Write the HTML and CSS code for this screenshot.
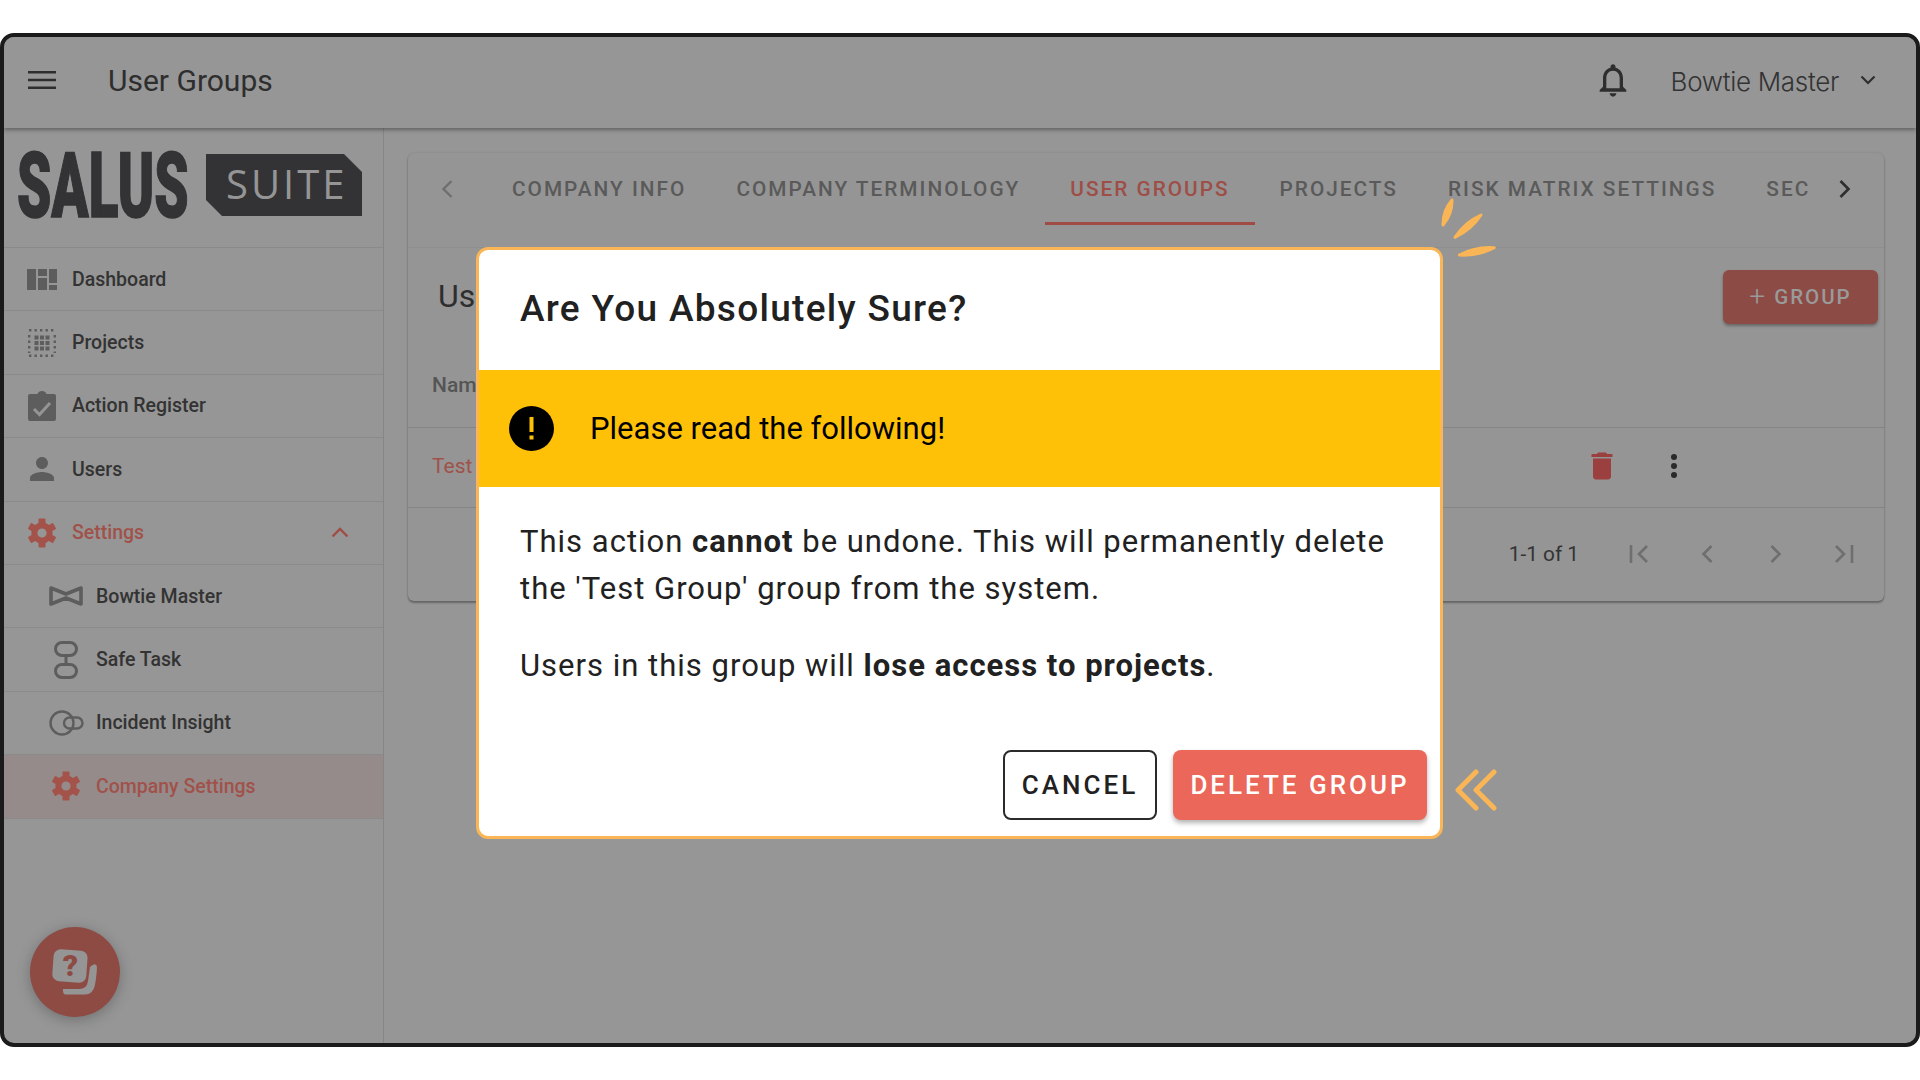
FILE: index.html
```html
<!DOCTYPE html>
<html lang="en">
<head>
    <meta charset="UTF-8">
    <title>User Groups</title>
    <link rel="stylesheet" href="styles.css">
</head>
<body>
    <svg class="defs" width="0" height="0">
        <symbol id="gear" viewBox="0 0 30 30">
            <circle cx="15" cy="15" r="7.6" fill="none" stroke="currentColor" stroke-width="6"/>
            <rect x="11.5" y="0.5" width="7" height="6" rx="1"/>
            <rect x="11.5" y="0.5" width="7" height="6" rx="1" transform="rotate(60 15 15)"/>
            <rect x="11.5" y="0.5" width="7" height="6" rx="1" transform="rotate(120 15 15)"/>
            <rect x="11.5" y="0.5" width="7" height="6" rx="1" transform="rotate(180 15 15)"/>
            <rect x="11.5" y="0.5" width="7" height="6" rx="1" transform="rotate(240 15 15)"/>
            <rect x="11.5" y="0.5" width="7" height="6" rx="1" transform="rotate(300 15 15)"/>
        </symbol>
    </svg>

    <div class="frame">
        <header class="topbar">
            <svg class="menu-icon" width="28" height="18" viewBox="0 0 28 18"><path d="M0 1.2h28M0 9h28M0 16.8h28" stroke="currentColor" stroke-width="2.4"/></svg>
            <h1 class="page-title">User Groups</h1>
            <svg class="bell" width="40" height="40" viewBox="0 0 24 24"><path d="M12 22c1.1 0 2-.9 2-2h-4c0 1.1.9 2 2 2zm6-6v-5c0-3.07-1.63-5.64-4.5-6.32V4c0-.83-.67-1.5-1.5-1.5s-1.5.67-1.5 1.5v.68C7.64 5.36 6 7.92 6 11v5l-2 2v1h16v-1l-2-2zm-2 1H8v-6c0-2.48 1.51-4.5 4-4.5s4 2.02 4 4.5v6z"/></svg>
            <span class="user-name">Bowtie Master</span>
            <svg class="user-caret" width="16" height="10" viewBox="0 0 16 10"><path d="M1.5 1.5 8 8l6.5-6.5" fill="none" stroke="currentColor" stroke-width="2.2"/></svg>
        </header>

        <div class="layout">
            <aside class="sidebar">
                <div class="logo">
                    <svg width="350" height="110" viewBox="0 -20 350 110">
                        <text class="logo-salus" transform="translate(-1 64) scale(.61 1)">SALUS</text>
                        <path class="logo-tag" d="M188 1h138l18 18v44H204L188 47z"/>
                        <text x="208" y="46" class="logo-suite">SUITE</text>
                    </svg>
                </div>
                <nav>
                    <a class="nav-item">
                        <span class="nav-icon"><svg width="30" height="21" viewBox="0 0 30 21"><path d="M0 0h9v21H0zM11 0h9v7h-9zM11 9h9v12h-9zM22 0h8v14h-8zM22 16h8v5h-8z"/></svg></span>
                        Dashboard
                    </a>
                    <a class="nav-item">
                        <span class="nav-icon"><svg width="28" height="28" viewBox="0 0 28 28"><path d="M6.5 6.5h4v4h-4zM12 6.5h4v4h-4zM17.5 6.5h4v4h-4zM6.5 12h4v4h-4zM12 12h4v4h-4zM17.5 12h4v4h-4zM6.5 17.5h4v4h-4zM12 17.5h4v4h-4zM17.5 17.5h4v4h-4z"/><path d="M1 1.2h27M1 26.8h27M1.2 6v18M26.8 6v18" fill="none" stroke="currentColor" stroke-width="2.4" stroke-dasharray="2.4 3.1"/></svg></span>
                        Projects
                    </a>
                    <a class="nav-item">
                        <span class="nav-icon"><svg width="28" height="30" viewBox="0 0 28 30"><path d="M2 3h7.5C10 1 12 0 14 0s4 1 4.5 3H26a2 2 0 0 1 2 2v23a2 2 0 0 1-2 2H2a2 2 0 0 1-2-2V5a2 2 0 0 1 2-2z"/><path d="m6 18 5.5 5.5L22 12" fill="none" stroke="#959595" stroke-width="3"/></svg></span>
                        Action Register
                    </a>
                    <a class="nav-item">
                        <span class="nav-icon"><svg width="36" height="36" viewBox="0 0 24 24"><path d="M12 12c2.21 0 4-1.79 4-4s-1.79-4-4-4-4 1.79-4 4 1.79 4 4 4zm0 2c-2.67 0-8 1.34-8 4v2h16v-2c0-2.66-5.33-4-8-4z"/></svg></span>
                        Users
                    </a>
                    <a class="nav-item is-open">
                        <span class="nav-icon"><svg width="30" height="30"><use href="#gear"/></svg></span>
                        Settings
                        <svg class="nav-caret" width="18" height="11" viewBox="0 0 18 11"><path d="M1.5 9.5 9 2l7.5 7.5" fill="none" stroke="currentColor" stroke-width="2.4"/></svg>
                    </a>
                    <a class="nav-item sub">
                        <span class="nav-icon"><svg width="34" height="20" viewBox="0 0 34 20"><path d="M2 2 17 8 32 2v16L17 12 2 18z" fill="none" stroke="currentColor" stroke-width="3.6" stroke-linejoin="round"/></svg></span>
                        Bowtie Master
                    </a>
                    <a class="nav-item sub">
                        <span class="nav-icon"><svg width="24" height="38" viewBox="0 0 24 38"><rect x="1.5" y="1.5" width="21" height="13" rx="6.5" fill="none" stroke="currentColor" stroke-width="3"/><rect x="1.5" y="23.5" width="21" height="13" rx="6.5" fill="none" stroke="currentColor" stroke-width="3"/><path d="M12 14v10" stroke="currentColor" stroke-width="3"/></svg></span>
                        Safe Task
                    </a>
                    <a class="nav-item sub">
                        <span class="nav-icon"><svg width="35" height="26" viewBox="0 0 35 26"><circle cx="13" cy="13" r="11.5" fill="none" stroke="currentColor" stroke-width="2.4"/><rect x="15" y="7.5" width="18.5" height="11" rx="5.5" fill="none" stroke="currentColor" stroke-width="2.4"/></svg></span>
                        Incident Insight
                    </a>
                    <a class="nav-item sub is-active">
                        <span class="nav-icon"><svg width="30" height="30"><use href="#gear"/></svg></span>
                        Company Settings
                    </a>
                </nav>
                <button class="help-fab">
                    <svg width="46" height="46" viewBox="0 0 46 46">
                        <path class="fab-back" d="M38 18Q43 13 44.8 17 45.5 20 43 36 41 45.5 33 45.5H14Q10.5 45.5 11 40H27Q35 40 36 32z"/>
                        <rect x="1" y="1" width="34" height="32" rx="7" class="fab-front" transform="rotate(4 18 16)"/>
                        <text x="18.5" y="27" class="fab-mark">?</text>
                    </svg>
                </button>
            </aside>

            <main class="content">
                <section class="card">
                    <div class="tabs">
                        <svg class="tab-arrow muted" width="12" height="20" viewBox="0 0 12 20"><path d="M10.5 2 2.5 10l8 8" fill="none" stroke="currentColor" stroke-width="2.4"/></svg>
                        <div class="tab-list">
                            <a class="tab">Company Info</a>
                            <a class="tab">Company Terminology</a>
                            <a class="tab is-active">User Groups</a>
                            <a class="tab">Projects</a>
                            <a class="tab">Risk Matrix Settings</a>
                            <a class="tab">Sec</a>
                        </div>
                        <svg class="tab-arrow" width="12" height="20" viewBox="0 0 12 20"><path d="M1.5 2l8 8-8 8" fill="none" stroke="currentColor" stroke-width="2.6"/></svg>
                    </div>
                    <div class="card-head">
                        <h2 class="card-title">Us</h2>
                        <button class="add-btn"><span class="plus">+</span> Group</button>
                    </div>
                    <div class="row row-head"><span>Nam</span></div>
                    <div class="row row-data">
                        <span class="group-name">Test</span>
                        <svg class="trash" width="36" height="36" viewBox="0 0 24 24"><path d="M6 19c0 1.1.9 2 2 2h8c1.1 0 2-.9 2-2V7H6v12zM19 4h-3.5l-1-1h-5l-1 1H5v2h14V4z"/></svg>
                        <svg class="dots" width="8" height="24" viewBox="0 0 8 24"><circle cx="4" cy="3" r="3"/><circle cx="4" cy="12" r="3"/><circle cx="4" cy="21" r="3"/></svg>
                    </div>
                    <div class="pager">
                        <span class="pager-count">1-1 of 1</span>
                        <svg width="20" height="20" viewBox="0 0 20 20"><path d="M2 1v18M18 2l-8 8 8 8" fill="none" stroke="currentColor" stroke-width="2.6"/></svg>
                        <svg class="pager-prev" width="12" height="20" viewBox="0 0 12 20"><path d="M10.5 2 2.5 10l8 8" fill="none" stroke="currentColor" stroke-width="2.6"/></svg>
                        <svg width="12" height="20" viewBox="0 0 12 20"><path d="M1.5 2l8 8-8 8" fill="none" stroke="currentColor" stroke-width="2.6"/></svg>
                        <svg width="20" height="20" viewBox="0 0 20 20"><path d="M2 2l8 8-8 8M18 1v18" fill="none" stroke="currentColor" stroke-width="2.6"/></svg>
                    </div>
                </section>
            </main>
        </div>

        <div class="modal">
            <h2 class="modal-title">Are You Absolutely Sure?</h2>
            <div class="banner">
                <svg width="45" height="45" viewBox="0 0 45 45"><circle cx="22.5" cy="22.5" r="22.5" fill="#000"/><path d="M20.5 11h4v15h-4zM20.5 29.5h4v4h-4z" fill="#ffc107"/></svg>
                <span>Please read the following!</span>
            </div>
            <div class="modal-body">
                <p>
                    <span class="line">This action <b>cannot</b> be undone. This will permanently delete</span>
                    <span class="line">the 'Test Group' group from the system.</span>
                </p>
                <p>Users in this group will <b>lose access to projects</b>.</p>
            </div>
            <div class="modal-actions">
                <button class="btn btn-cancel">Cancel</button>
                <button class="btn btn-delete">Delete Group</button>
            </div>
        </div>

        <!-- hand drawn callouts around the dialog -->
        <svg class="sparks" width="60" height="62" viewBox="0 0 60 62">
            <path d="M15 2Q15.3 16.1 6 27 5.7 12.9 15 2zM44 17Q34.3 31.800 18 39.3 27.7 24.2 44 17zM57.3 49.7Q40.8 58.2 22.3 57 38.8 48.4 57.3 49.7z" fill="#f9b556" stroke="#f9b556" stroke-width="3" stroke-linejoin="round"/>
        </svg>
        <svg class="arrows" width="42" height="42" viewBox="0 0 42 42">
            <path d="M21 3 3 21l18 18M39 3 21 21l18 18" fill="none" stroke="#f9b556" stroke-width="5" stroke-linecap="round" stroke-linejoin="round"/>
        </svg>
    </div>
</body>
</html>
```

FILE: styles.css
```css
* {
    box-sizing: border-box;
}
html, body {
    margin: 0;
    height: 1080px;
    overflow: hidden;
    background: #fff;
}
body {
    padding-top: 33px;
    font-family: Roboto, "Liberation Sans", sans-serif;
    color: #2e2e2e;
}
.defs {
    position: absolute;
}
.frame {
    position: relative;
    width: 1920px;
    height: 1014px;
    border: 4px solid #1b1b1b;
    border-radius: 14px;
    background: #969696;
    overflow: hidden;
}

/* top bar */
.topbar {
    display: flex;
    align-items: center;
    height: 91px;
    padding: 0 40px 5px 24px;
    background: #969696;
    box-shadow: 0 2px 4px rgba(0, 0, 0, 0.35);
    position: relative;
    z-index: 1;
}
.menu-icon {
    margin-right: 52px;
}
.page-title {
    flex: 1;
    margin: 0;
    font-size: 30px;
    font-weight: 400;
}
.bell {
    margin-right: 38px;
    fill: #2e2e2e;
}
.user-name {
    margin-top: 3px;
    font-family: Inter, sans-serif;
    font-size: 26px;
    font-weight: 300;
    letter-spacing: -0.3px;
    color: #333;
}
.user-caret {
    margin-left: 21px;
    margin-top: 0;
}

.layout {
    display: grid;
    grid-template-columns: 380px 1fr;
    height: 915px;
}

/* sidebar */
.sidebar {
    position: relative;
    border-right: 1px solid #868686;
}
.logo {
    height: 120px;
    padding: 5px 0 0 14px;
    border-bottom: 1px solid #8a8a8a;
}
.logo-salus {
    font-family: Roboto, sans-serif;
    font-size: 90px;
    font-weight: 900;
    fill: #333335;
    stroke: #333335;
    stroke-width: 1.5px;
}
.logo-tag {
    fill: #333335;
}
.logo-suite {
    font-family: "Open Sans", sans-serif;
    font-size: 40px;
    letter-spacing: 3px;
    fill: #959595;
}
.nav-item {
    display: flex;
    align-items: center;
    gap: 12px;
    height: 63.4px;
    padding-left: 20px;
    border-bottom: 1px solid #8a8a8a;
    font-size: 19.5px;
    font-weight: 500;
    color: #333;
}
.nav-item.sub {
    padding-left: 44px;
}
.nav-icon {
    display: flex;
    justify-content: center;
    align-items: center;
    width: 36px;
    height: 36px;
    fill: #5d5d5d;
    color: #5d5d5d;
}
.nav-item.is-open,
.nav-item.is-active {
    color: #a0524a;
}
.nav-item.is-open .nav-icon,
.nav-item.is-active .nav-icon {
    fill: #a3534a;
    color: #a3534a;
}
.nav-item.is-active {
    background: #968b8b;
}
.nav-caret {
    margin-left: auto;
    margin-right: 34px;
    color: #a04c45;
}
.help-fab {
    position: absolute;
    left: 26px;
    top: 799px;
    display: flex;
    align-items: center;
    justify-content: center;
    width: 90px;
    height: 90px;
    padding: 0;
    border: none;
    border-radius: 50%;
    background: #8d4b44;
    box-shadow: 0 3px 14px rgba(0, 0, 0, 0.25);
}
.fab-front, .fab-back {
    fill: #959595;
}
.fab-mark {
    font-family: Roboto, sans-serif;
    font-size: 30px;
    font-weight: 900;
    text-anchor: middle;
    fill: #8d4b44;
}

/* page content */
.content {
    padding: 25px 32px 0 24px;
}
.card {
    height: 448px;
    border-radius: 6px;
    background: #959595;
    box-shadow: 0 2px 2px rgba(0, 0, 0, 0.3), 0 0 2px rgba(0, 0, 0, 0.15);
}
.tabs {
    display: flex;
    align-items: flex-start;
    height: 95px;
    border-bottom: 1px solid #8e8e8e;
}
.tab-arrow {
    margin: 26px 0 0 33px;
    flex: none;
}
.tab-arrow.muted {
    color: #6f6f6f;
}
.tab-list {
    display: flex;
    width: 1319px;
    margin-left: 34px;
}
.tab {
    height: 72px;
    padding: 0 25px;
    line-height: 72px;
    font-size: 20.8px;
    font-weight: 500;
    letter-spacing: 2px;
    text-transform: uppercase;
    color: #5a5a5a;
    white-space: nowrap;
}
.tab.is-active {
    border-bottom: 3px solid #a04c45;
    color: #9e4e47;
}
.card-head {
    display: flex;
    align-items: center;
    justify-content: space-between;
    height: 98px;
    padding: 0 6px 0 30px;
}
.card-title {
    margin: 0 0 2px;
    font-size: 32px;
    font-weight: 400;
}
.add-btn {
    width: 155px;
    height: 54px;
    border: none;
    border-radius: 6px;
    background: #8c4b45;
    box-shadow: 0 2px 3px rgba(0, 0, 0, 0.3);
    font-family: inherit;
    font-size: 20.5px;
    font-weight: 500;
    letter-spacing: 2px;
    text-transform: uppercase;
    color: #9a9a9a;
}
.plus {
    font-size: 28px;
    font-weight: 300;
    line-height: 20px;
    vertical-align: -2px;
}
.row {
    display: flex;
    align-items: center;
    padding-left: 24px;
    padding-bottom: 3px;
    border-bottom: 1px solid #858585;
    font-size: 20px;
}
.row-head {
    height: 82px;
    font-size: 21px;
    font-weight: 500;
    color: #555;
}
.row-data {
    height: 80px;
    font-size: 21px;
}
.group-name {
    flex: 1;
    color: #a0524a;
}
.trash {
    fill: #9c3f3f;
    margin-right: 50px;
}
.dots {
    fill: #2a2a2a;
    margin-right: 206px;
}
.pager {
    display: flex;
    align-items: center;
    justify-content: flex-end;
    gap: 52px;
    height: 91px;
    padding-right: 30px;
    color: #6f6f6f;
}
.pager-count {
    margin-right: -2px;
    font-size: 20.8px;
    color: #333;
}
.pager-prev {
    margin-right: 5px;
}

/* confirm dialog */
.modal {
    position: absolute;
    left: 472px;
    top: 210px;
    z-index: 5;
    display: flex;
    flex-direction: column;
    width: 967px;
    height: 592px;
    border: 3px solid #f9b556;
    border-radius: 12px;
    background: #fff;
    color: #212121;
}
.modal-title {
    height: 120px;
    margin: 0;
    padding-left: 41px;
    font-size: 37px;
    font-weight: 500;
    letter-spacing: 1.3px;
    line-height: 117px;
}
.banner {
    display: flex;
    align-items: center;
    gap: 36px;
    height: 117px;
    padding-left: 30px;
    background: #ffc107;
    font-size: 31px;
    color: #000;
}
.modal-body {
    padding: 32px 41px 0;
    font-size: 31px;
    line-height: 46.5px;
    letter-spacing: 1px;
}
.modal-body p {
    margin: 0 0 31px;
}
.line {
    display: block;
}
.modal-actions {
    display: flex;
    justify-content: flex-end;
    gap: 16px;
    margin-top: auto;
    padding: 0 13px 16px 0;
}
.btn {
    height: 70px;
    border-radius: 8px;
    font-family: inherit;
    font-size: 26px;
    font-weight: 500;
    letter-spacing: 3px;
    text-transform: uppercase;
}
.btn-cancel {
    width: 154px;
    border: 2px solid #2b2b2b;
    background: #fff;
    color: #212121;
}
.btn-delete {
    width: 254px;
    border: none;
    background: #eb6759;
    box-shadow: 0 3px 5px rgba(0, 0, 0, 0.3);
    color: #fff;
}

/* callouts */
.sparks {
    position: absolute;
    left: 1433px;
    top: 161px;
    z-index: 6;
}
.arrows {
    position: absolute;
    left: 1451px;
    top: 732px;
    z-index: 6;
}
```
